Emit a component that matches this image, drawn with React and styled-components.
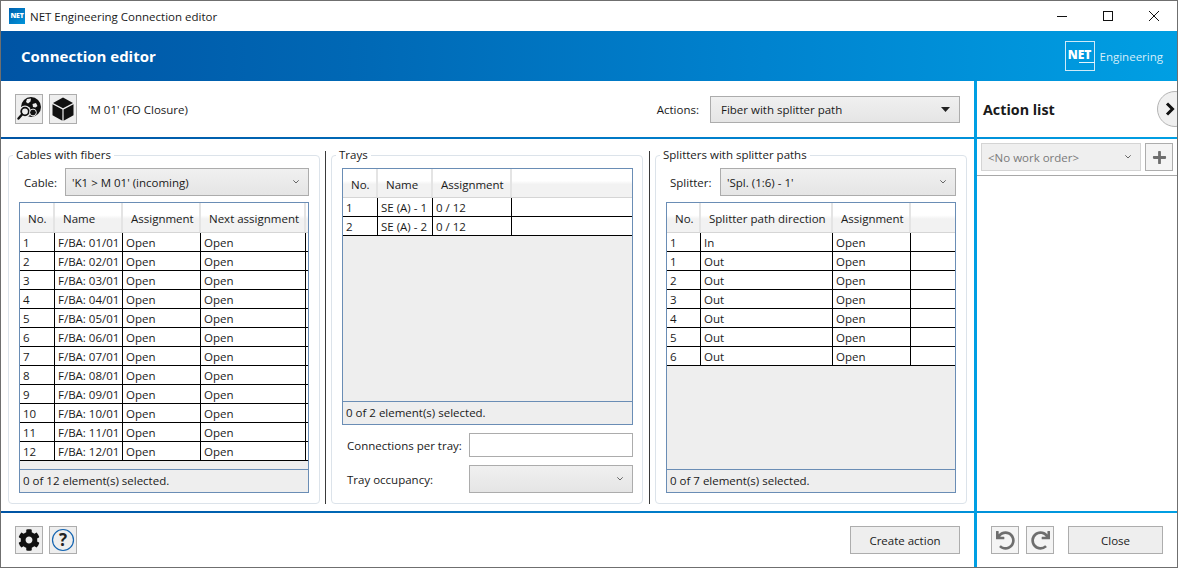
import React from 'react'
import styled, { createGlobalStyle } from 'styled-components'
import { FaCog, FaUndo, FaRedo, FaPlus } from 'react-icons/fa'

const GlobalStyle = createGlobalStyle`
  html, body {
    margin: 0;
    padding: 0;
    background: white;
    overflow: hidden;
  }
  body {
    font-family: 'Open Sans', 'Noto Sans', sans-serif;
    font-size: 11.5px;
    color: #1a1a1a;
  }
  * {
    box-sizing: border-box;
  }
`

const blueGradient = 'linear-gradient(90deg, #0054a4 0%, #0068b5 30%, #0083cf 65%, #009fe3 100%)'

const Window = styled.div`
  width: 1178px;
  height: 568px;
  display: flex;
  flex-direction: column;
  border: 1px solid #6f6f6f;
  background: white;
`
const TitleBar = styled.div`
  height: 30px;
  display: flex;
  align-items: center;
  padding-left: 8px;
  flex-shrink: 0;
`
const AppIcon = styled.div`
  width: 16px;
  height: 16px;
  background: linear-gradient(135deg, #0060ae, #0094da);
  color: white;
  font-size: 7px;
  font-weight: 800;
  line-height: 16px;
  text-align: center;
  letter-spacing: -0.2px;
`
const TitleText = styled.span`
  margin-left: 5px;
`
const WindowControls = styled.div`
  margin-left: auto;
  display: flex;
`
const WindowControl = styled.div`
  width: 46px;
  height: 30px;
  display: flex;
  align-items: center;
  justify-content: center;
`
const Banner = styled.div`
  height: 50px;
  flex-shrink: 0;
  display: flex;
  align-items: center;
  justify-content: space-between;
  padding: 0 14px 0 20px;
  background: ${blueGradient};
  color: white;
`
const BannerTitle = styled.div`
  font-size: 15px;
  font-weight: 700;
`
const Logo = styled.div`
  display: flex;
  align-items: center;
  gap: 5px;
`
const LogoBox = styled.div`
  position: relative;
  width: 30px;
  height: 30px;
  border: 1px solid #cfeaf8;
  font-size: 12px;
  font-weight: 800;
  line-height: 26px;
  text-align: center;

  &::after {
    content: '';
    position: absolute;
    right: -1px;
    bottom: 7px;
    width: 16px;
    height: 1px;
    background: #e6f5fc;
  }
`
const LogoText = styled.span`
  color: #d5eefa;
`
const Body = styled.div`
  flex: 1;
  display: flex;
  min-height: 0;
`
const Main = styled.div`
  width: 973px;
  display: flex;
  flex-direction: column;
`
const Rule = styled.div`
  height: 2px;
  flex-shrink: 0;
  background: ${blueGradient};
  background-attachment: fixed;
`
const Toolbar = styled.div`
  height: 56px;
  flex-shrink: 0;
  display: flex;
  align-items: center;
  padding: 0 14px;
`
const IconButton = styled.div`
  width: 28px;
  height: ${p => p.$tall ? '30px' : '28px'};
  margin-right: 6px;
  display: flex;
  align-items: center;
  justify-content: center;
  background: ${p => p.$disabled ? '#f4f4f4' : '#eeeeee'};
  border: 1px solid #adadad;
  color: ${p => p.$disabled ? '#6e6e6e' : '#111'};
  flex-shrink: 0;
`
const ElementName = styled.span`
  margin-left: 5px;
`
const ActionsLabel = styled.span`
  margin-left: auto;
  margin-right: 11px;
`
const Combo = styled.div`
  height: ${p => p.$height || 28}px;
  width: ${p => p.$width}px;
  flex-shrink: 0;
  display: flex;
  align-items: center;
  justify-content: space-between;
  padding: 0 9px 0 6px;
  border: 1px solid #acacac;
  background: linear-gradient(180deg, #f0f0f0, #e5e5e5);
`
const ActionValue = styled.span`
  padding-left: 4px;
`
const Content = styled.div`
  flex: 1;
  display: flex;
  padding: 8px 0 7px 7px;
  min-height: 0;
`
const Separator = styled.div`
  width: 1px;
  margin: 4px 5px 0 ${p => p.$left || 5}px;
  background: #3a3a3a;
  flex-shrink: 0;
`
const Group = styled.fieldset`
  width: 312px;
  margin: 0;
  padding: 0 ${p => p.$right || 10}px 0 10px;
  border: 1px solid #dce3ea;
  border-radius: 4px;
  flex-shrink: 0;
  min-width: 0;
`
const GroupTitle = styled.legend`
  padding: 0 3px;
  margin-left: -6px;
  line-height: 16px;
`
const FieldRow = styled.div`
  display: flex;
  align-items: center;
  justify-content: space-between;
  margin-top: ${p => p.$top || 0}px;
  padding-left: ${p => p.$indent || 0}px;
`
const Chevron = styled.svg`
  width: 6px;
  height: 4px;
  flex-shrink: 0;
`
const Grid = styled.div`
  height: ${p => p.$height}px;
  margin-top: ${p => p.$top || 0}px;
  display: flex;
  flex-direction: column;
  border: 1px solid #6a8db5;
  background: #eeeeee;
`
const Row = styled.div`
  display: grid;
  grid-template-columns: ${p => p.$columns};
  flex-shrink: 0;
`
const HeadRow = styled(Row)`
  height: ${p => p.$height || 30}px;
  background: linear-gradient(180deg, #ffffff 0%, #ffffff 42%, #f2f2f2 55%, #f2f2f2 100%);
  border-bottom: 1px solid #d5d5d5;
`
const HeadCell = styled.div`
  display: flex;
  align-items: center;
  padding: 2px 0 0 8px;
  border-right: 2px solid #e4e4e4;
  white-space: nowrap;
  overflow: hidden;
`
const BodyRow = styled(Row)`
  height: 19px;
  background: white;
  border-bottom: 1px solid black;
`
const Cell = styled.div`
  padding-left: 3px;
  line-height: 19px;
  white-space: nowrap;
  overflow: hidden;
  border-right: 1px solid black;
`
const EmptyArea = styled.div`
  flex: 1;
`
const GridFooter = styled.div`
  height: 23px;
  flex-shrink: 0;
  padding-left: 3px;
  line-height: 22px;
  border-top: 1px solid #6a8db5;
  background: #eeeeee;
`
const TextField = styled.div`
  width: 164px;
  height: 24px;
  border: 1px solid #acacac;
  background: white;
`
const FieldLabel = styled.span`
  padding-left: 5px;
`
const Footer = styled.div`
  height: 54px;
  flex-shrink: 0;
  display: flex;
  align-items: center;
  padding: 0 14px;
`
const PushButton = styled.div`
  width: ${p => p.$width}px;
  height: 28px;
  margin-left: auto;
  margin-right: ${p => p.$right || 0}px;
  display: flex;
  align-items: center;
  justify-content: center;
  border: 1px solid #adadad;
  background: #eeeeee;
`
const Side = styled.div`
  flex: 1;
  position: relative;
  display: flex;
  flex-direction: column;
  overflow: hidden;
`
const SideInner = styled.div`
  flex: 1;
  display: flex;
  flex-direction: column;
  border-left: 3px solid #009fe3;
`
const SideTitle = styled.div`
  height: 56px;
  flex-shrink: 0;
  padding-left: 6px;
  display: flex;
  align-items: center;
  font-size: 14.3px;
  font-weight: 700;
`
const CollapseButton = styled.div`
  position: absolute;
  left: 183px;
  top: 10px;
  width: 36px;
  height: 36px;
  padding-left: 7px;
  display: flex;
  align-items: center;
  border-radius: 50%;
  border: 1px solid #b4b4b4;
  background: #f0f0f0;
`
const WorkOrderRow = styled.div`
  height: 37px;
  flex-shrink: 0;
  display: flex;
  align-items: flex-start;
  padding: 4px 0 0 4px;
  gap: 4px;
  border-bottom: 1px solid #a8a8a8;
`
const WorkOrder = styled(Combo)`
  color: #7a7a7a;
  border-color: #d4d4d4;
  background: #efefef;
`
const SideSpacer = styled.div`
  flex: 1;
`
const SideFooter = styled.div`
  height: 54px;
  flex-shrink: 0;
  display: flex;
  align-items: center;
  padding-left: 14px;
`
const RedoButton = styled(IconButton)`
  margin-left: 1px;
`

const ChevronDown = () => (
  <Chevron viewBox='0 0 6 4'>
    <path d='M0.3 0.3 L3 3 L5.7 0.3' fill='none' stroke='#666' strokeWidth='1' />
  </Chevron>
)

const GlobeIcon = () => (
  <svg width='24' height='24' viewBox='0 0 24 24'>
    <circle cx='14' cy='10' r='10' fill='#111' />
    <path d='M10 2 L14 1.5 L13.5 4.5 L11 6.5 L9 5 Z M15.5 7 L19 6 L20.5 9 L18.5 10.5 L16 10 Z' fill='#eee' />
    <circle cx='8' cy='14.5' r='6' fill='#eee' />
    <circle cx='8' cy='14.5' r='3.8' fill='#eee' stroke='#111' strokeWidth='1.8' />
    <path d='M5 17.5 L1.5 21.5' stroke='#111' strokeWidth='2.4' strokeLinecap='round' />
    <circle cx='16' cy='15.5' r='3.4' fill='#111' stroke='#eee' strokeWidth='1' />
  </svg>
)

const CubeIcon = () => (
  <svg width='22' height='24' viewBox='0 0 22 24' fill='#111'>
    <path d='M11 0.5 L21 6 L11 11.2 L1 6 Z' />
    <path d='M0.5 7.2 L10.4 12.4 L10.4 23.8 L0.5 18.2 Z' />
    <path d='M21.5 7.2 L11.6 12.4 L11.6 23.8 L21.5 18.2 Z' />
  </svg>
)

const HelpIcon = () => (
  <svg width='24' height='24' viewBox='0 0 24 24'>
    <circle cx='12' cy='12' r='10.5' fill='none' stroke='#1464b0' strokeWidth='1.2' />
    <text x='12' y='18' textAnchor='middle' fontSize='17' fontWeight='700' fontFamily='Open Sans, sans-serif' fill='#222'>?</text>
  </svg>
)

const DataGrid = ({ columns, head, rows, footer, height, top, headHeight }) => (
  <Grid $height={height} $top={top}>
    <HeadRow $columns={columns} $height={headHeight}>
      {head.map(h => <HeadCell key={h}>{h}</HeadCell>)}
      <span />
    </HeadRow>
    {rows.map((r, i) => (
      <BodyRow key={i} $columns={columns}>
        {r.map((c, j) => <Cell key={j}>{c}</Cell>)}
        <span />
      </BodyRow>
    ))}
    <EmptyArea />
    <GridFooter>{footer}</GridFooter>
  </Grid>
)

const pad = n => String(n).padStart(2, '0')
const fibers = Array.from({ length: 12 }, (_, i) => [
  i + 1, `F/BA: ${pad(i + 1)}/01`, 'Open', 'Open'
])
const trays = [
  [1, 'SE (A) - 1', '0 / 12'],
  [2, 'SE (A) - 2', '0 / 12']
]
const paths = [
  [1, 'In', 'Open'],
  ...[1, 2, 3, 4, 5, 6].map(n => [n, 'Out', 'Open'])
]

export default function App() {
  return (
    <Window>
      <GlobalStyle />
      <TitleBar>
        <AppIcon>NET</AppIcon>
        <TitleText>NET Engineering Connection editor</TitleText>
        <WindowControls>
          <WindowControl>
            <svg width='10' height='10' viewBox='0 0 10 10'><path d='M0 5.5 H10' stroke='#111' /></svg>
          </WindowControl>
          <WindowControl>
            <svg width='10' height='10' viewBox='0 0 10 10'><rect x='0.5' y='0.5' width='9' height='9' fill='none' stroke='#111' /></svg>
          </WindowControl>
          <WindowControl>
            <svg width='10' height='10' viewBox='0 0 10 10'><path d='M0 0 L10 10 M10 0 L0 10' stroke='#111' /></svg>
          </WindowControl>
        </WindowControls>
      </TitleBar>
      <Banner>
        <BannerTitle>Connection editor</BannerTitle>
        <Logo>
          <LogoBox>NET</LogoBox>
          <LogoText>Engineering</LogoText>
        </Logo>
      </Banner>
      <Body>
        <Main>
          <Toolbar>
            <IconButton $tall><GlobeIcon /></IconButton>
            <IconButton $tall><CubeIcon /></IconButton>
            <ElementName>'M 01' (FO Closure)</ElementName>
            <ActionsLabel>Actions:</ActionsLabel>
            <Combo $width={250} $height={27}>
              <ActionValue>Fiber with splitter path</ActionValue>
              <svg width='9' height='5' viewBox='0 0 9 5'><path d='M0 0 H9 L4.5 5 Z' fill='#222' /></svg>
            </Combo>
          </Toolbar>
          <Rule />
          <Content>
            <Group>
              <GroupTitle>Cables with fibers</GroupTitle>
              <FieldRow $top={5} $indent={5}>
                <span>Cable:</span>
                <Combo $width={244}>
                  <span>'K1 &gt; M 01' (incoming)</span>
                  <ChevronDown />
                </Combo>
              </FieldRow>
              <DataGrid
                top={6}
                height={291}
                columns='35px 68px 78px 105px 1fr'
                head={['No.', 'Name', 'Assignment', 'Next assignment']}
                rows={fibers}
                footer='0 of 12 element(s) selected.'
              />
            </Group>
            <Separator />
            <Group $right={9}>
              <GroupTitle>Trays</GroupTitle>
              <DataGrid
                top={5}
                height={257}
                headHeight={29}
                columns='35px 55px 79px 1fr'
                head={['No.', 'Name', 'Assignment']}
                rows={trays}
                footer='0 of 2 element(s) selected.'
              />
              <FieldRow $top={8}>
                <FieldLabel>Connections per tray:</FieldLabel>
                <TextField />
              </FieldRow>
              <FieldRow $top={8}>
                <FieldLabel>Tray occupancy:</FieldLabel>
                <Combo $width={164}>
                  <span />
                  <ChevronDown />
                </Combo>
              </FieldRow>
            </Group>
            <Separator $left={6} />
            <Group>
              <GroupTitle>Splitters with splitter paths</GroupTitle>
              <FieldRow $top={5} $indent={4}>
                <span>Splitter:</span>
                <Combo $width={236}>
                  <span>'Spl. (1:6) - 1'</span>
                  <ChevronDown />
                </Combo>
              </FieldRow>
              <DataGrid
                top={6}
                height={291}
                columns='34px 132px 78px 1fr'
                head={['No.', 'Splitter path direction', 'Assignment']}
                rows={paths}
                footer='0 of 7 element(s) selected.'
              />
            </Group>
          </Content>
          <Rule />
          <Footer>
            <IconButton><FaCog size={22} /></IconButton>
            <IconButton><HelpIcon /></IconButton>
            <PushButton $width={110}>Create action</PushButton>
          </Footer>
        </Main>
        <Side>
          <SideInner>
            <SideTitle>Action list</SideTitle>
            <Rule />
            <WorkOrderRow>
              <WorkOrder $width={160}>
                <span>&lt;No work order&gt;</span>
                <ChevronDown />
              </WorkOrder>
              <IconButton $disabled><FaPlus size={15} /></IconButton>
            </WorkOrderRow>
            <SideSpacer />
            <Rule />
            <SideFooter>
              <IconButton $disabled><FaUndo size={19} /></IconButton>
              <RedoButton $disabled><FaRedo size={19} /></RedoButton>
              <PushButton $width={95} $right={14}>Close</PushButton>
            </SideFooter>
          </SideInner>
          <CollapseButton>
            <svg width='10' height='14' viewBox='0 0 10 14'>
              <path d='M2 1.5 L7.5 7 L2 12.5' fill='none' stroke='#111' strokeWidth='3' />
            </svg>
          </CollapseButton>
        </Side>
      </Body>
    </Window>
  )
}
